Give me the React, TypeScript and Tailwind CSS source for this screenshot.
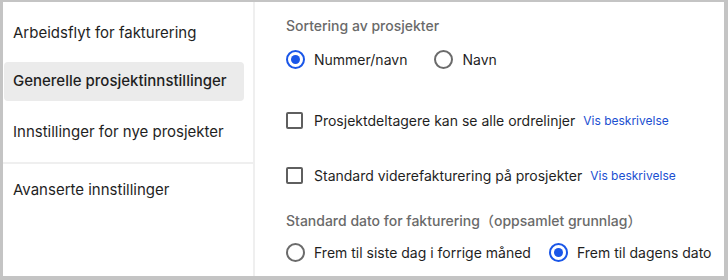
import React, { useState } from 'react';

const Radio: React.FC<{ checked: boolean; label: string; onClick: () => void }> = ({ checked, label, onClick }) => (
  <button
    type="button"
    onClick={onClick}
    className="flex items-center gap-[9px] whitespace-nowrap text-[14px] text-[#1f1f1f]"
  >
    <span
      className={`flex h-[19px] w-[19px] shrink-0 items-center justify-center rounded-full border-2 ${
        checked ? 'border-[#1a56e8]' : 'border-[#6b6b6b]'
      }`}
    >
      {checked && <span className="h-[9px] w-[9px] rounded-full bg-[#1a56e8]" />}
    </span>
    {label}
  </button>
);

const Checkbox: React.FC<{ label: string }> = ({ label }) => {
  const [checked, setChecked] = useState(false);
  return (
    <div className="flex items-center whitespace-nowrap text-[14px] text-[#1f1f1f]">
      <button
        type="button"
        onClick={() => setChecked(!checked)}
        className="mr-[11px] h-[17px] w-[17px] shrink-0 rounded-[2px] border-2 border-[#5f5f5f]"
      />
      <span>{label}</span>
      <span className="ml-[8px] text-[12px] text-[#1a4fd1]">Vis beskrivelse</span>
    </div>
  );
};

const App: React.FC = () => {
  const [sort, setSort] = useState('nummer');
  const [dato, setDato] = useState('dagens');

  return (
    <div className="flex h-[280px] w-[728px] border-b-4 border-l-[3px] border-r-4 border-t-2 border-[#c4c4c4] bg-white font-['Inter','Noto_Sans_CJK_JP',sans-serif]">
      {/* Sidebar */}
      <div className="w-[252px] shrink-0 border-r-2 border-[#efefef] text-[15px] text-[#1f1f1f]">
        <div className="pl-[10px] pt-[20px]">Arbeidsflyt for fakturering</div>
        <div className="mt-[17px] mr-[9px] ml-[1px] flex h-[39px] items-center rounded-[4px] bg-[#ebebeb] pl-[9px] font-medium">
          Generelle prosjektinnstillinger
        </div>
        <div className="pt-[20px] pb-[19px] pl-[10px]">Innstillinger for nye prosjekter</div>
        <div className="border-t-2 border-[#efefef] pt-[15px] pl-[10px]">Avanserte innstillinger</div>
      </div>

      {/* Content */}
      <div className="flex-1 pl-[31px] pt-[13px]">
        <div className="text-[14px] font-medium text-[#6a6a6a]">Sortering av prosjekter</div>
        <div className="mt-[13px] flex gap-[27px]">
          <Radio checked={sort === 'nummer'} label="Nummer/navn" onClick={() => setSort('nummer')} />
          <Radio checked={sort === 'navn'} label="Navn" onClick={() => setSort('navn')} />
        </div>
        <div className="mt-[40px]">
          <Checkbox label="Prosjektdeltagere kan se alle ordrelinjer" />
        </div>
        <div className="mt-[34px]">
          <Checkbox label="Standard viderefakturering på prosjekter" />
        </div>
        <div className="mt-[24px] text-[14px] font-medium text-[#6a6a6a]">
          Standard dato for fakturering（oppsamlet grunnlag）
        </div>
        <div className="mt-[11px] flex gap-[18px]">
          <Radio checked={dato === 'forrige'} label="Frem til siste dag i forrige måned" onClick={() => setDato('forrige')} />
          <Radio checked={dato === 'dagens'} label="Frem til dagens dato" onClick={() => setDato('dagens')} />
        </div>
      </div>
    </div>
  );
};

export default App;
